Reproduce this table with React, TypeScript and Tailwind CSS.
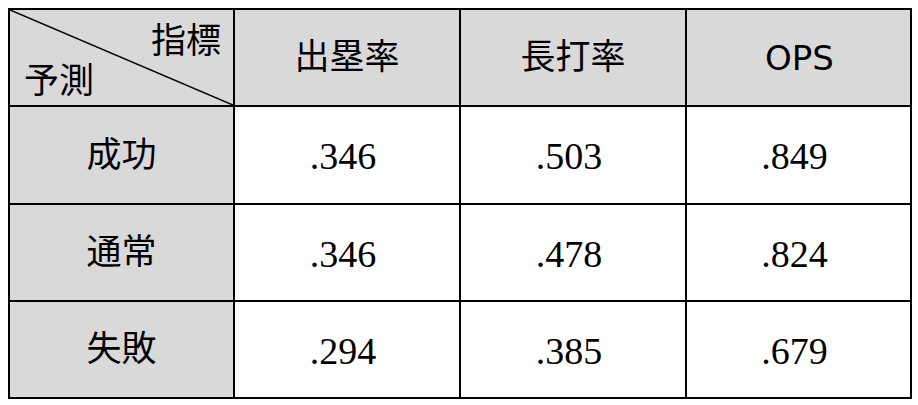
const HEADERS = ['出塁率', '長打率', 'OPS'];

const ROWS: { label: string; values: string[] }[] = [
  { label: '成功', values: ['.346', '.503', '.849'] },
  { label: '通常', values: ['.346', '.478', '.824'] },
  { label: '失敗', values: ['.294', '.385', '.679'] },
];

const JP = "font-['Noto_Sans_CJK_JP','Noto_Sans',sans-serif] text-[35px] leading-none";
const NUM = "font-['Liberation_Serif',serif] text-[38px] leading-none";

function CornerCell() {
  return (
    <div className="relative bg-[#d9d9d9]">
      <svg className="absolute inset-0 h-full w-full" viewBox="0 0 223 95" preserveAspectRatio="none">
        <line x1="0" y1="0" x2="223" y2="95" stroke="#000" strokeWidth="1.6" />
      </svg>
      <span className={`absolute right-[12px] top-[10px] ${JP}`}>指標</span>
      <span className={`absolute left-[14px] bottom-[10px] ${JP}`}>予測</span>
    </div>
  );
}

export default function App() {
  return (
    <div className="min-h-[405px] w-[918px] bg-white p-2">
      <div className="grid w-fit grid-cols-[223px_224px_224px_223px] grid-rows-[95px_96px_95px_95px] gap-[2px] bg-black p-[2px] text-black">
        <CornerCell />
        {HEADERS.map((h) =>
          h === 'OPS' ? (
            <div key={h} className="flex items-center justify-center bg-[#d9d9d9] pl-[2px]">
              <span className="font-['DejaVu_Sans',sans-serif] text-[34px] leading-none">{h}</span>
            </div>
          ) : (
            <div key={h} className="flex items-center justify-center bg-[#d9d9d9] pb-[8px]">
              <span className={JP}>{h}</span>
            </div>
          ),
        )}
        {ROWS.map((r) => (
          <>
            <div key={r.label} className="flex items-center justify-center bg-[#d9d9d9] pb-[8px]">
              <span className={JP}>{r.label}</span>
            </div>
            {r.values.map((v, i) => (
              <div key={r.label + i} className="flex items-center justify-center bg-white pr-[8px] pt-[2px]">
                <span className={NUM}>{v}</span>
              </div>
            ))}
          </>
        ))}
      </div>
    </div>
  );
}
